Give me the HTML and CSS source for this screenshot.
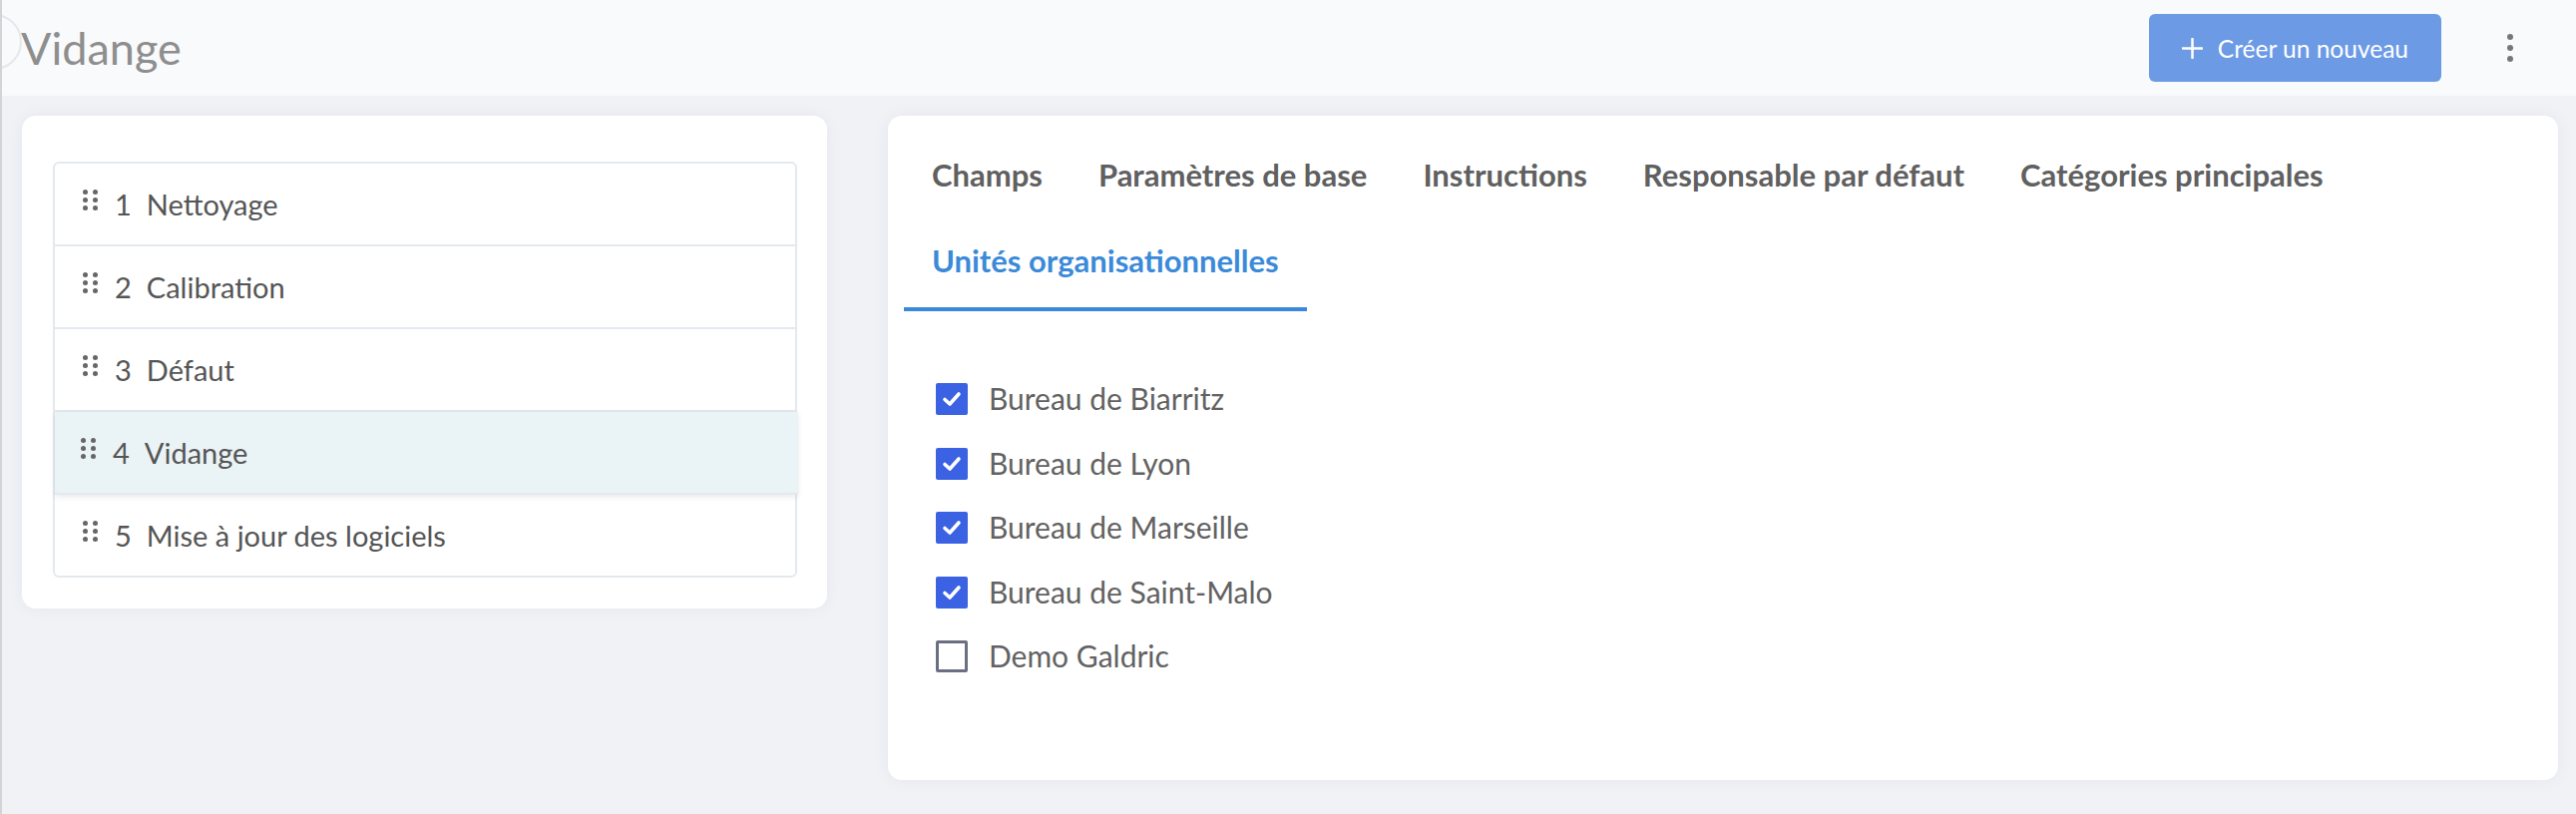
FILE: index.html
```html
<!DOCTYPE html>
<html lang="fr">
<head>
    <meta charset="UTF-8">
    <meta name="viewport" content="width=device-width, initial-scale=1.0">
    <title>Vidange</title>
    <link rel="stylesheet" href="styles.css">
</head>
<body>

    <div class="sidebar-toggle"></div>

    <header class="topbar">
        <h1 class="page-title">Vidange</h1>
        <button class="btn-create">
            <svg class="btn-icon" viewBox="0 0 22 22" width="21" height="21">
                <path d="M11 1v20M1 11h20" stroke="#fff" stroke-width="2.6" stroke-linecap="round"/>
            </svg>
            Créer un nouveau
        </button>
        <button class="btn-more" aria-label="Plus">
            <span></span><span></span><span></span>
        </button>
    </header>

    <main class="layout">

        <section class="card steps-card">
            <ul class="steps">
                <li class="step"><span class="handle"><i></i><i></i><i></i><i></i><i></i><i></i></span><span class="num">1</span>Nettoyage</li>
                <li class="step"><span class="handle"><i></i><i></i><i></i><i></i><i></i><i></i></span><span class="num">2</span>Calibration</li>
                <li class="step"><span class="handle"><i></i><i></i><i></i><i></i><i></i><i></i></span><span class="num">3</span>Défaut</li>
                <li class="step dragging"><span class="handle"><i></i><i></i><i></i><i></i><i></i><i></i></span><span class="num">4</span>Vidange</li>
                <li class="step"><span class="handle"><i></i><i></i><i></i><i></i><i></i><i></i></span><span class="num">5</span>Mise à jour des logiciels</li>
            </ul>
        </section>

        <section class="card detail-card">
            <nav class="tabs">
                <a class="tab">Champs</a>
                <a class="tab">Paramètres de base</a>
                <a class="tab">Instructions</a>
                <a class="tab">Responsable par défaut</a>
                <a class="tab">Catégories principales</a>
                <a class="tab active">Unités organisationnelles</a>
            </nav>

            <div class="units">
                <label class="unit"><span class="box checked"></span>Bureau de Biarritz</label>
                <label class="unit"><span class="box checked"></span>Bureau de Lyon</label>
                <label class="unit"><span class="box checked"></span>Bureau de Marseille</label>
                <label class="unit"><span class="box checked"></span>Bureau de Saint-Malo</label>
                <label class="unit"><span class="box"></span>Demo Galdric</label>
            </div>
        </section>

    </main>

</body>
</html>
```

FILE: styles.css
```css
body {
    margin: 0;
    font-family: "Lato", "Open Sans", sans-serif;
    background-color: #f1f2f6;
    color: #555;
    border-left: 2px solid #d4d4d6;
    min-height: 816px;
    box-sizing: border-box;
    position: relative;
}

/* half hidden round toggle on the left edge */
.sidebar-toggle {
    position: absolute;
    left: -36px;
    top: 14px;
    width: 56px;
    height: 56px;
    border: 2px solid #e6e7ea;
    border-radius: 50%;
    box-sizing: border-box;
}

.topbar {
    height: 96px;
    background-color: #f9fafc;
    display: flex;
    align-items: center;
    padding: 0 63px 0 19px;
}
.page-title {
    margin: 0;
    font-size: 45px;
    font-weight: 400;
    color: #8e8e8e;
    flex: 1;
}
.btn-create {
    display: flex;
    align-items: center;
    gap: 15px;
    height: 68px;
    padding: 0 33px;
    background-color: #6c9ae5;
    color: #fff;
    border: none;
    border-radius: 6px;
    font-family: inherit;
    font-size: 24.5px;
    cursor: pointer;
}
.btn-more {
    display: flex;
    flex-direction: column;
    gap: 5px;
    margin-left: 66px;
    padding: 0;
    background: none;
    border: none;
}
.btn-more span {
    width: 6px;
    height: 6px;
    border-radius: 50%;
    background-color: #777;
}

.layout {
    display: grid;
    grid-template-columns: 807px 1fr;
    gap: 61px;
    align-items: start;
    padding: 20px 18px 0 20px;
}
.card {
    background-color: #fff;
    border-radius: 14px;
    box-shadow: 0 0 18px rgba(30, 40, 70, 0.05);
}

/* left card: ordered steps */
.steps-card {
    padding: 46px 30px 31px 31px;
}
.steps {
    list-style: none;
    margin: 0;
    padding: 0;
    border: 2px solid #e4e9ee;
    border-radius: 6px;
}
.step {
    display: flex;
    align-items: center;
    height: 81px;
    padding-left: 28px;
    font-size: 29px;
    color: #555;
    border-bottom: 2px solid #e4e9ee;
}
.step:last-child {
    border-bottom: none;
}
.step.dragging {
    background-color: #eaf3f6;
    margin-right: -3px;
    padding-left: 26px;
    box-shadow: 0 2px 6px rgba(0, 0, 0, 0.09);
    position: relative;
}
.handle {
    display: grid;
    grid-template-columns: 5px 5px;
    column-gap: 5px;
    row-gap: 3px;
    margin-right: 17px;
    margin-top: -8px;
}
.handle i {
    width: 5px;
    height: 5px;
    border-radius: 50%;
    background-color: #666;
}
.num {
    margin-right: 15px;
}

/* right card: tabs and units */
.detail-card {
    padding: 24px 16px 92px;
}
.tabs {
    display: flex;
    flex-wrap: wrap;
}
.tab {
    padding: 15px 28px 27px;
    line-height: 40px;
    font-size: 31px;
    font-weight: 700;
    color: #606060;
    border-bottom: 4px solid transparent;
    cursor: pointer;
}
.tab.active {
    color: #3b8ad9;
    border-bottom-color: #3b88d8;
}
.units {
    margin: 55px 0 0 32px;
}
.unit {
    display: flex;
    align-items: center;
    gap: 21px;
    height: 64.5px;
    font-size: 30px;
    color: #626262;
}
.box {
    width: 32px;
    height: 32px;
    box-sizing: border-box;
    border: 3px solid #6b7080;
    border-radius: 2px;
    margin-top: 2px;
}
.box.checked {
    border: none;
    background-color: #3b62e2;
    background-image: url("data:image/svg+xml;utf8,<svg xmlns='http://www.w3.org/2000/svg' viewBox='0 0 32 32'><path d='M9 16.5l5 4.5 9-10' fill='none' stroke='white' stroke-width='3.6' stroke-linecap='round' stroke-linejoin='round'/></svg>");
}
```
